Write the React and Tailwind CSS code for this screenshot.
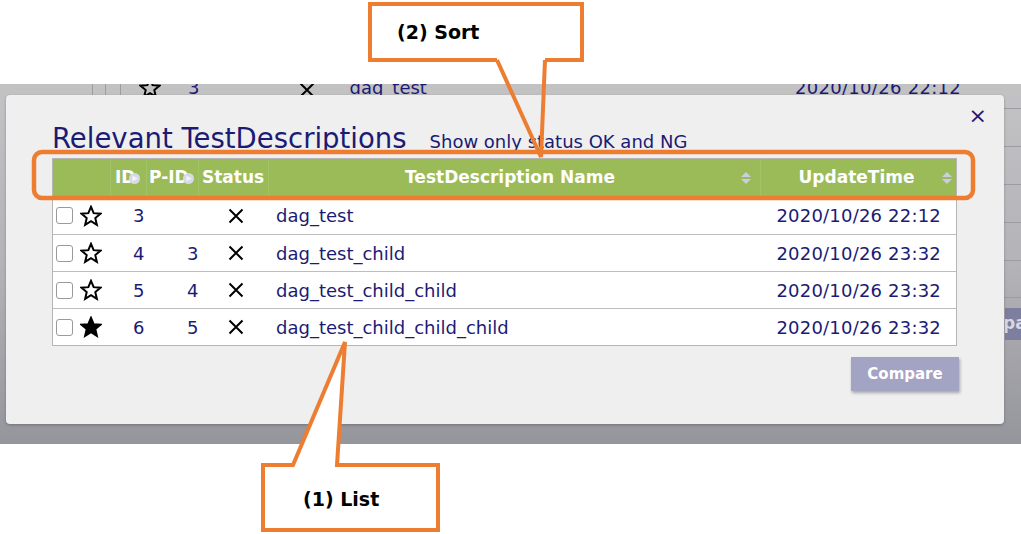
import React from 'react'

const rows = [
  { id: 3, pid: '', name: 'dag_test', time: '2020/10/26 22:12', fav: false },
  { id: 4, pid: 3, name: 'dag_test_child', time: '2020/10/26 23:32', fav: false },
  { id: 5, pid: 4, name: 'dag_test_child_child', time: '2020/10/26 23:32', fav: false },
  { id: 6, pid: 5, name: 'dag_test_child_child_child', time: '2020/10/26 23:32', fav: true },
]

function Star({ filled }) {
  return (
    <svg width="22" height="22" viewBox="0 0 24 24">
      <polygon
        points="12,2 14.9,8.9 22.3,9.5 16.7,14.3 18.4,21.6 12,17.7 5.6,21.6 7.3,14.3 1.7,9.5 9.1,8.9"
        fill={filled ? '#000' : 'none'}
        stroke="#000"
        strokeWidth="2.2"
      />
    </svg>
  )
}

function Cross() {
  return (
    <svg width="16" height="16" viewBox="0 0 16 16">
      <path d="M1.5 1.5 L14.5 14.5 M14.5 1.5 L1.5 14.5" stroke="#000" strokeWidth="2" />
    </svg>
  )
}

function SortBoth() {
  return (
    <svg width="10" height="14" viewBox="0 0 10 14">
      <polygon points="0,6 5,1 10,6" fill="#c9cde3" />
      <polygon points="0,8 5,13 10,8" fill="#c9cde3" />
    </svg>
  )
}

function SortRight() {
  return (
    <svg width="11" height="11" viewBox="0 0 11 11" className="-ml-[6px]">
      <circle cx="5.5" cy="5.5" r="5.5" fill="#d6d9e8" />
      <polygon points="3.5,2.5 8.5,5.5 3.5,8.5" fill="#f4f4f8" />
    </svg>
  )
}

function Checkbox() {
  return <div className="h-[17px] w-[17px] rounded-[3px] border border-[#9a9a9a] bg-white" />
}

export default function App() {
  return (
    <div className="relative flex h-[534px] w-[1021px] flex-col overflow-hidden bg-white font-['DejaVu_Sans',sans-serif]">
      <div className="h-[84px] shrink-0" />

      {/* backdrop screenshot */}
      <div className="flex h-[360px] shrink-0 flex-col bg-gradient-to-b from-[#c3c3c5] via-[#b3b3b8] to-[#95959c]">
        {/* clipped page row behind the modal */}
        <div className="h-[11px] overflow-hidden bg-[#c2c2c2]">
          <div className="-mt-[7px] flex h-[22px] items-center text-[18px] leading-[22px] text-[#1b1b74]">
            <div className="h-full w-[92px]" />
            <div className="h-full w-[13px] border-l border-[#9d9d9d]" />
            <div className="h-full w-[15px] border-l border-[#9d9d9d]" />
            <div className="flex h-full items-center border-l border-[#9d9d9d] pl-[18px]">
              <Star />
            </div>
            <span className="ml-[27px]">3</span>
            <span className="ml-[100px] mt-[4px]"><Cross /></span>
            <span className="ml-[34px]">dag_test</span>
            <span className="ml-[368px] tracking-[0.3px]">2020/10/26 22:12</span>
          </div>
        </div>

        <div className="flex h-[329px]">
          <div className="w-[6px] shrink-0" />

          {/* modal */}
          <div className="relative flex w-[998px] shrink-0 flex-col rounded-[4px] bg-[#efefef] pl-[46px] pt-[26px] shadow-[0_1px_3px_rgba(0,0,0,0.25)]">
            <button className="absolute right-[17px] top-[10px] text-[22px] leading-none text-[#1b1b74]">×</button>

            <div className="flex h-[34px] items-baseline leading-[34px] text-[#1b1b74]">
              <span className="text-[27.5px]">Relevant TestDescriptions</span>
              <span className="ml-[23px] text-[18px]">Show only status OK and NG</span>
            </div>

            <div className="mt-[3px] w-[905px] border border-[#b5b5b5] bg-white">
              <div className="flex h-[38px] items-center bg-[#9bbb59] text-[17px] font-bold text-white">
                <div className="h-full w-[58px] border-r border-[#a4c266]" />
                <div className="flex h-full w-[36px] items-center border-r border-[#a4c266] pl-[4px]">
                  ID<SortRight />
                </div>
                <div className="flex h-full w-[52px] items-center border-r border-[#a4c266] pl-[2px]">
                  P-ID<SortRight />
                </div>
                <div className="flex h-full w-[70px] items-center border-r border-[#a4c266] pl-[3px]">Status</div>
                <div className="flex h-full w-[492px] items-center border-r border-[#a4c266] pr-[9px]">
                  <div className="flex-1" />
                  <span>TestDescription Name</span>
                  <div className="flex flex-1 justify-end"><SortBoth /></div>
                </div>
                <div className="flex h-full flex-1 items-center pr-[4px]">
                  <div className="flex-1" />
                  <span>UpdateTime</span>
                  <div className="flex flex-1 justify-end"><SortBoth /></div>
                </div>
              </div>

              {rows.map((r, i) => (
                <div
                  key={r.id}
                  className={`flex h-[37px] items-center text-[18px] text-[#1b1b74] ${i > 0 ? 'border-t border-[#bdbdbd]' : ''}`}
                >
                  <div className="flex w-[58px] items-center gap-[7px] pl-[3px]">
                    <Checkbox />
                    <Star filled={r.fav} />
                  </div>
                  <div className="w-[36px] pl-[22px]">{r.id}</div>
                  <div className="w-[52px] pl-[40px]">{r.pid}</div>
                  <div className="flex w-[70px] pl-[29px]"><Cross /></div>
                  <div className="w-[492px] pl-[7px]">{r.name}</div>
                  <div className="flex-1 pr-[15px] text-right tracking-[0.2px]">{r.time}</div>
                </div>
              ))}
            </div>

            <div className="mt-[11px] flex w-[907px] justify-end">
              <button className="h-[34px] w-[108px] bg-[#a3a3c3] text-[15px] font-bold text-white shadow-[1px_2px_3px_rgba(0,0,0,0.3)]">
                Compare
              </button>
            </div>
          </div>

          {/* right edge of page behind */}
          <div className="flex flex-1 flex-col">
            <div className="h-[13px]" />
            <div className="h-[38px] border-t border-[#9c9ca3]" />
            <div className="h-[38px] border-t border-[#9c9ca3]" />
            <div className="h-[38px] border-t border-[#9c9ca3]" />
            <div className="h-[38px] border-t border-[#9c9ca3]" />
            <div className="h-[37px] border-t border-[#9c9ca3]" />
            <div className="h-[11px] border-t border-[#9c9ca3]" />
            <div className="ml-[1px] flex h-[32px] items-center overflow-hidden bg-[#7e7e9e] text-[17px] font-bold text-[#d8d8e4]">
              <span className="-ml-[2px]">pa</span>
            </div>
          </div>
        </div>

        <div className="flex-1" />
      </div>

      <div className="flex-1" />

      {/* annotation callouts */}
      <svg className="pointer-events-none absolute left-0 top-0" width="1021" height="534" viewBox="0 0 1021 534">
        <rect x="34" y="152" width="939" height="46" rx="8" fill="none" stroke="#ed7d31" strokeWidth="4.5" />
        <path d="M497 60 L370 60 L370 4 L582 4 L582 60 L545 60" fill="#fff" stroke="#ed7d31" strokeWidth="4" />
        <polyline points="497,60 541,157 545,60" fill="none" stroke="#ed7d31" strokeWidth="4" />
        <path
          d="M263 465 L293 465 L345 342 L337 465 L438 465 L438 530 L263 530 Z"
          fill="#fff"
          stroke="#ed7d31"
          strokeWidth="4"
        />
      </svg>
      <div className="pointer-events-none absolute left-[397px] top-[18px] text-[19px] font-bold text-black">(2) Sort</div>
      <div className="pointer-events-none absolute left-[303px] top-[485px] text-[19px] font-bold text-black">(1) List</div>
    </div>
  )
}
